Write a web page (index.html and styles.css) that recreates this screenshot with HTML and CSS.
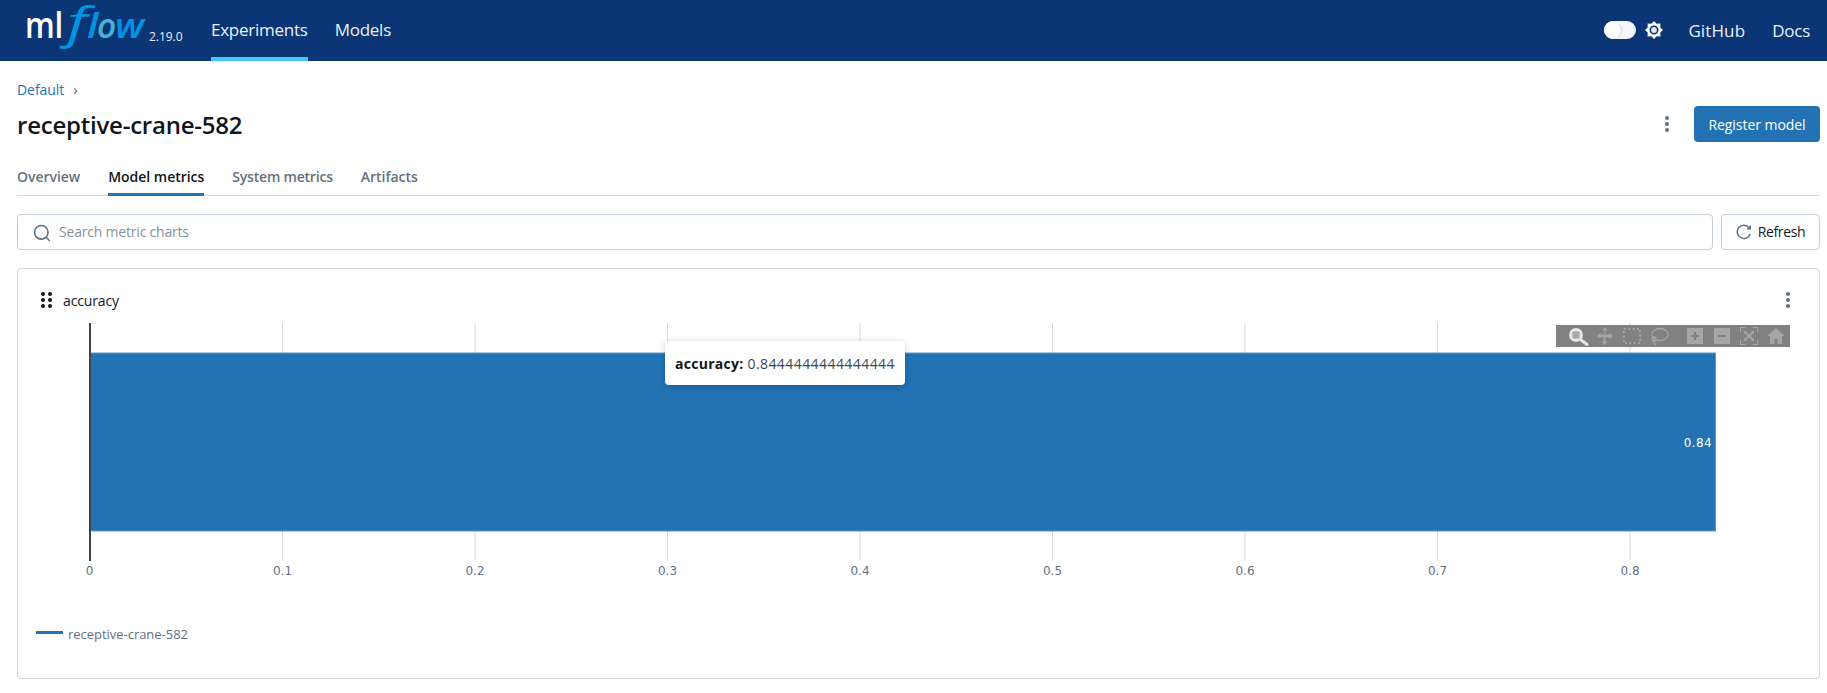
FILE: index.html
```html
<!DOCTYPE html>
<html lang="en">
<head>
<meta charset="utf-8">
<title>receptive-crane-582 - MLflow</title>
<link rel="stylesheet" href="styles.css">
</head>
<body>
<header class="topbar">
  <div class="brand">
    <svg class="logo" width="122" height="52" viewBox="0 0 122 52" role="img" aria-label="mlflow">
      <text class="logo-ml" x="-1" y="38" textLength="38" lengthAdjust="spacingAndGlyphs">ml</text>
      <text class="logo-flow"><tspan class="logo-f" x="41" y="38" textLength="20" lengthAdjust="spacingAndGlyphs">f</tspan><tspan class="logo-l" x="61" y="38" textLength="11" lengthAdjust="spacingAndGlyphs">l</tspan><tspan class="logo-o" x="71" y="38" textLength="19" lengthAdjust="spacingAndGlyphs">o</tspan><tspan class="logo-w" x="89" y="38" textLength="29" lengthAdjust="spacingAndGlyphs">w</tspan></text>
    </svg>
    <span class="version">2.19.0</span>
  </div>
  <nav class="mainnav">
    <a class="navlink navlink-on">Experiments</a>
    <a class="navlink">Models</a>
  </nav>
  <div class="topright">
    <span class="switch"><span class="knob"></span></span>
    <svg class="sun" width="18" height="18" viewBox="0 0 18 18" aria-hidden="true">
      <path fill="#fff" d="M18 9L15.300 11.600 15.400 15.400 11.600 15.300 9 18 6.400 15.300 2.600 15.400 2.700 11.600 0 9 2.700 6.400 2.600 2.600 6.400 2.700 9 0 11.600 2.700 15.400 2.600 15.300 6.400z"/>
      <circle cx="9" cy="9" r="3.700" fill="#dfe6ef" stroke="#0b3574" stroke-width="1.600"/>
    </svg>
    <a class="toplink github">GitHub</a>
    <a class="toplink">Docs</a>
  </div>
</header>

<main class="page">
  <div class="crumbs"><a class="crumb">Default</a><span class="crumb-sep">›</span></div>
  <div class="titlerow">
    <h1 class="title">receptive-crane-582</h1>
    <div class="titleactions">
      <svg class="kebab" width="4" height="16" viewBox="0 0 4 16" aria-hidden="true"><circle cx="2" cy="2" r="2"/><circle cx="2" cy="8" r="2"/><circle cx="2" cy="14" r="2"/></svg>
      <button class="primary">Register model</button>
    </div>
  </div>
  <div class="tabs">
    <a class="tab">Overview</a>
    <a class="tab tab-on">Model metrics</a>
    <a class="tab tab-sys">System metrics</a>
    <a class="tab">Artifacts</a>
  </div>
  <div class="filters">
    <label class="search">
      <svg width="18" height="18" viewBox="0 0 18 18" fill="none" stroke="#5f7281" stroke-width="1.6" aria-hidden="true"><circle cx="8.300" cy="8.300" r="6.800"/><path d="M13.200 13.200l3.600 3.800"/></svg>
      <span class="placeholder">Search metric charts</span>
    </label>
    <button class="ghost">
      <svg width="16" height="16" viewBox="0 0 16 16" fill="none" aria-hidden="true"><path d="M14.200 9.600A6.600 6.600 0 1 1 12.800 3.400" stroke="#5f7281" stroke-width="1.500"/><path d="M15 .8v4.800h-4.800z" fill="#5f7281"/></svg>
      <span>Refresh</span>
    </button>
  </div>
  <section class="card">
    <div class="cardhead">
      <svg class="grip" width="11" height="16" viewBox="0 0 11 16" aria-hidden="true"><circle cx="2" cy="2" r="2"/><circle cx="9" cy="2" r="2"/><circle cx="2" cy="8" r="2"/><circle cx="9" cy="8" r="2"/><circle cx="2" cy="14" r="2"/><circle cx="9" cy="14" r="2"/></svg>
      <span class="cardtitle">accuracy</span>
      <svg class="kebab" width="4" height="16" viewBox="0 0 4 16" aria-hidden="true"><circle cx="2" cy="2" r="2"/><circle cx="2" cy="8" r="2"/><circle cx="2" cy="14" r="2"/></svg>
    </div>
    <div class="chart">
      <svg class="plot" width="1801" height="357" viewBox="0 0 1801 357">
        <g class="grid">
          <path d="M264.500 3V240.500M457 3V240.500M649.500 3V240.500M842 3V240.500M1034.500 3V240.500M1227 3V240.500M1419.500 3V240.500M1612 3V240.500"/>
        </g>
        <rect class="bar" x="72" y="33" width="1625.500" height="178"/>
        <rect class="axis" x="71" y="3" width="2" height="238"/>
        <text class="barlabel" x="1694" y="127" text-anchor="end">0.84</text>
        <g class="ticks" text-anchor="middle">
          <text x="71.500" y="255">0</text>
          <text x="264.500" y="255">0.1</text>
          <text x="457" y="255">0.2</text>
          <text x="649.500" y="255">0.3</text>
          <text x="842" y="255">0.4</text>
          <text x="1034.500" y="255">0.5</text>
          <text x="1227" y="255">0.6</text>
          <text x="1419.500" y="255">0.7</text>
          <text x="1612" y="255">0.8</text>
        </g>
        <rect class="legendline" x="18" y="311" width="27" height="3"/>
        <text class="legendtext" x="50" y="319">receptive-crane-582</text>
      </svg>
      <div class="modebar">
        <svg width="234" height="22" viewBox="0 0 234 22" aria-hidden="true">
          <circle cx="20" cy="10" r="7" fill="#e6e6e6"/>
          <rect x="16.500" y="6.500" width="7" height="7" fill="#a8a8a8"/>
          <path d="M24.500 14.500l6.500 5" fill="none" stroke="#e6e6e6" stroke-width="3" stroke-linecap="round"/>
          <path class="mb" d="M48.500 2l3 3.500h-2v4h4v-2l3.500 3.500-3.500 3.500v-2h-4v4h2l-3 3.500-3-3.500h2v-4h-4v2L41 11l3.500-3.500v2h4v-4h-2z"/>
          <rect x="68" y="4" width="16" height="14" fill="none" stroke="#a6a6a6" stroke-width="2" stroke-dasharray="2 2.300"/>
          <g fill="none" stroke="#a6a6a6" stroke-width="1.300"><ellipse cx="104" cy="9.500" rx="8" ry="6"/><circle cx="98" cy="14" r="2"/><path d="M98 16c0 1.500 1 3 2 4"/></g>
          <path class="mb" fill-rule="evenodd" d="M131 3h16v16h-16zM138 7v3h-3v2h3v3h2v-3h3v-2h-3V7z"/>
          <path class="mb" fill-rule="evenodd" d="M158 3h16v16h-16zM162 10v2h8v-2z"/>
          <path class="mb" d="M184 2h5v1h-4v4h-1zM197 2h5v5h-1V3h-4zM184 15h1v4h4v1h-5zM201 15h1v5h-5v-1h4z"/>
          <path class="mb" d="M188 6h3l-.8.8 2.800 2.800 2.800-2.800L195 6h3v3l-.8-.8-2.800 2.800 2.800 2.800.8-.8v3h-3l.8-.8-2.800-2.800-2.800 2.800.8.8h-3v-3l.8.8 2.800-2.800-2.800-2.800-.8.8z"/>
          <path class="mb" d="M220 3l8.500 8h-2.500v8h-4.500v-5h-3v5H214v-8h-2.500z"/>
        </svg>
      </div>
      <div class="tip"><b class="tipkey">accuracy:</b> <span class="tipval">0.8444444444444444</span></div>
    </div>
  </section>
</main>
</body>
</html>
```
FILE: styles.css
```css
* { box-sizing: border-box; }
html, body { margin: 0; padding: 0; background: #fff; }
body {
  font-family: "Open Sans", "Noto Sans", sans-serif;
  font-size: 14px;
  color: #11171c;
  height: 693px;
  overflow: hidden;
}
a { color: inherit; text-decoration: none; }

.topbar {
  height: 61px;
  background: #0b3574;
  display: flex;
  align-items: stretch;
  color: #e8f1f8;
  font-size: 17px;
  letter-spacing: -0.25px;
}
.brand { display: flex; align-items: flex-start; padding-left: 26px; width: 211px; position: relative; }
.logo { display: block; flex: none; }
.logo-ml { font-family: "Open Sans", sans-serif; font-weight: 600; font-size: 36px; fill: #fff; }
.logo-flow { font-family: "Open Sans", sans-serif; font-style: italic; font-weight: 600; font-size: 34px; fill: #0194e2; }
.logo-f { font-size: 44px; font-weight: 400; }
.logo-o { fill: #43b4d8; }
.version { position: absolute; left: 149px; top: 28px; font-size: 12px; letter-spacing: -0.05px; color: #e8f1f8; }
.mainnav { display: flex; gap: 27px; }
.navlink { display: flex; align-items: center; height: 61px; border-bottom: 4px solid transparent; padding-top: 2px; }
.navlink-on { border-bottom-color: #43c9ed; }
.topright { margin-left: auto; display: flex; align-items: center; padding-right: 17px; padding-bottom: 1px; }
.switch { width: 32px; height: 18px; border-radius: 9px; background: #f4f6f9; display: block; position: relative; margin-right: 9px; }
.knob { position: absolute; left: 0; top: 0; width: 18px; height: 18px; border-radius: 50%; background: #fff; border-right: 1px solid #c9d4e0; }
.sun { display: block; margin-right: 25px; }
.toplink { display: block; }
.github { margin-right: 27px; letter-spacing: 0.12px; }

.page { padding: 0 7px 0 17px; }
.crumbs { height: 41px; padding-top: 15px; display: flex; align-items: center; gap: 9px; font-size: 14px; letter-spacing: -0.05px; margin-bottom: 4px; }
.crumb { color: #2272b4; }
.crumb-sep { color: #5f7281; font-size: 15px; }
.titlerow { display: flex; align-items: center; justify-content: space-between; height: 36px; }
.title { margin: 0; font-size: 24px; font-weight: 600; letter-spacing: -0.23px; color: #11171c; line-height: 36px; padding-top: 1px; }
.titleactions { display: flex; align-items: center; gap: 25px; }
.kebab { display: block; fill: #5f7281; }
.primary {
  height: 36px; width: 126px; padding: 0; border: 0; border-radius: 4px; background: #2272b4; color: #fff;
  font: inherit; letter-spacing: -0.05px;
}
.tabs { display: flex; gap: 28px; height: 54px; align-items: flex-end; border-bottom: 1px solid #d1d9e1; letter-spacing: -0.03px; }
.tab { color: #5f7281; font-weight: 600; height: 28px; }
.tab-on { color: #11171c; border-bottom: 3px solid #2272b4; margin-bottom: -1px; height: 29px; }
.tab-sys { letter-spacing: -0.2px; }
.filters { display: flex; gap: 8px; margin-top: 18px; height: 36px; }
.search {
  flex: 1; border: 1px solid #c3cfdb; border-radius: 4px; display: flex; align-items: center; gap: 8px; padding-left: 15px;
}
.search svg { margin-bottom: -1px; }
.placeholder { color: #82939f; letter-spacing: -0.2px; margin-top: -2px; }
.ghost {
  width: 99px; height: 36px; border: 1px solid #c3cfdb; border-radius: 4px; background: #fff;
  display: flex; align-items: center; justify-content: center; gap: 6px; padding: 0;
  font: inherit; color: #11171c; letter-spacing: -0.4px;
}
.ghost span { margin-top: -2px; }
.card { margin-top: 18px; height: 411px; border: 1px solid #d1d9e1; border-radius: 4px; }
.cardhead { height: 51px; display: flex; align-items: center; padding: 11px 29px 0 23px; }
.grip { display: block; fill: #11171c; margin-right: 11px; }
.cardtitle { letter-spacing: -0.15px; flex: 1; }
.chart { position: relative; height: 357px; }
.plot { display: block; }
.grid path { stroke: #d1d9e1; stroke-width: 1; fill: none; }
.bar { fill: #2272b4; stroke: #5a98c9; stroke-width: 1; }
.axis { fill: #444; }
.ticks text, .barlabel { font-family: "DejaVu Sans", sans-serif; font-size: 12px; }
.ticks text { fill: #5f7281; }
.barlabel { fill: #fff; letter-spacing: 0.4px; }
.legendline { fill: #2272b4; }
.legendtext { font-family: "Open Sans", sans-serif; font-size: 13px; letter-spacing: -0.03px; fill: #5f7281; }
.modebar { position: absolute; left: 1538px; top: 5px; width: 234px; height: 22px; background: rgba(112, 112, 112, 0.88); }
.modebar svg { display: block; }
.mb { fill: #a6a6a6; }
.tip {
  position: absolute; left: 647px; top: 21px; width: 240px; height: 44px; background: #fff; border-radius: 4px;
  box-shadow: 0 1px 6px rgba(0, 0, 0, 0.2); display: flex; align-items: center; padding-left: 10px; gap: 4px;
  color: #37474f;
}
.tipkey { color: #11171c; font-weight: 700; letter-spacing: 0.27px; }
.tipval { letter-spacing: 0.43px; }
```
